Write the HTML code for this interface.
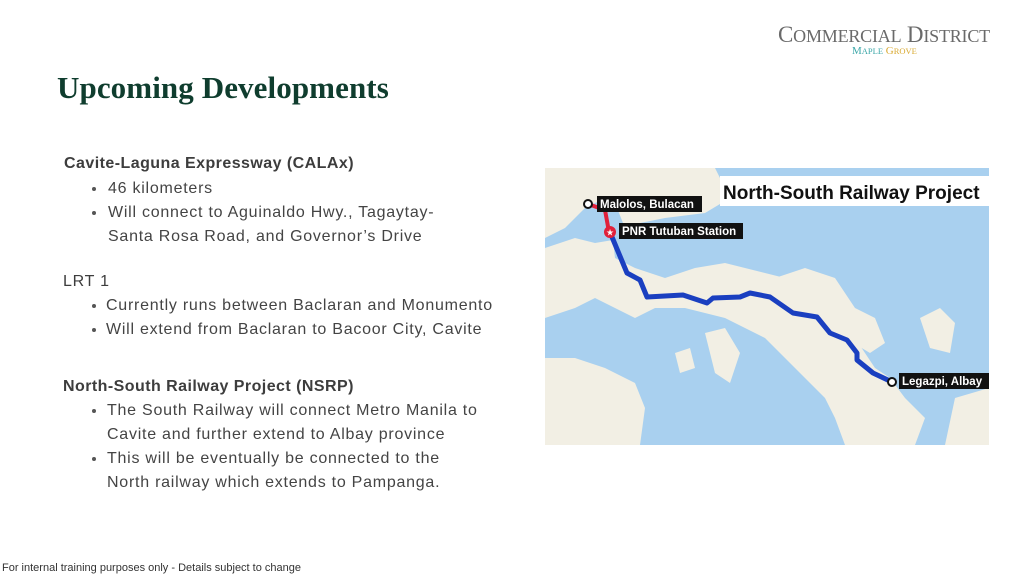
<!DOCTYPE html>
<html><head><meta charset="utf-8"><style>
body{margin:0;width:1024px;height:575px;background:#fff;position:relative;overflow:hidden;font-family:"Liberation Sans",sans-serif}
.t{position:absolute;white-space:nowrap;color:#444;font-size:16px;line-height:20px;letter-spacing:0.75px;top:0}
.h{color:#3d3d3d;font-weight:bold;font-size:16px;letter-spacing:0.45px}
.b{position:absolute;left:92px;width:4px;height:4px;border-radius:50%;background:#555}
</style></head><body>
<div style="position:absolute;left:778px;top:22px;font-family:'Liberation Serif',serif;color:#6a6a6a;font-size:23px;letter-spacing:-0.2px;white-space:nowrap">C<span style="font-size:18px">OMMERCIAL</span> D<span style="font-size:18px">ISTRICT</span></div>
<div style="position:absolute;left:852px;top:45px;font-family:'Liberation Serif',serif;font-size:11px;white-space:nowrap"><span style="color:#3aa6a8">M<span style="font-size:8.5px">APLE</span></span> <span style="color:#d9a930">G<span style="font-size:8.5px">ROVE</span></span></div>
<div style="position:absolute;left:57px;top:70px;font-family:'Liberation Serif',serif;font-weight:bold;font-size:31px;color:#0f3d2e;white-space:nowrap;letter-spacing:0.1px">Upcoming Developments</div>

<div class="t h" style="left:64px;top:154px">Cavite-Laguna Expressway (CALAx)</div>
<div class="b" style="top:187px"></div><div class="t" style="left:108px;top:179px">46 kilometers</div>
<div class="b" style="top:211px"></div><div class="t" style="left:108px;top:203px">Will connect to Aguinaldo Hwy., Tagaytay-</div>
<div class="t" style="left:108px;top:227px">Santa Rosa Road, and Governor’s Drive</div>

<div class="t" style="left:63px;top:272px;color:#3d3d3d">LRT 1</div>
<div class="b" style="top:304px"></div><div class="t" style="left:106px;top:296px">Currently runs between Baclaran and Monumento</div>
<div class="b" style="top:328px"></div><div class="t" style="left:106px;top:320px">Will extend from Baclaran to Bacoor City, Cavite</div>

<div class="t h" style="left:63px;top:377px">North-South Railway Project (NSRP)</div>
<div class="b" style="top:409px"></div><div class="t" style="left:107px;top:401px">The South Railway will connect Metro Manila to</div>
<div class="t" style="left:107px;top:425px">Cavite and further extend to Albay province</div>
<div class="b" style="top:457px"></div><div class="t" style="left:107px;top:449px">This will be eventually be connected to the</div>
<div class="t" style="left:107px;top:473px">North railway which extends to Pampanga.</div>

<div style="position:absolute;left:2px;top:562px;font-size:11px;color:#333;white-space:nowrap">For internal training purposes only - Details subject to change</div>

<svg style="position:absolute;left:545px;top:168px" width="444" height="277" viewBox="0 0 444 277">
<rect width="444" height="277" fill="#a9d0ef"/>
<g fill="#f2efe4">
<path d="M0 0H170L185 30L160 45L120 50L95 55L80 60L72 40L60 30L40 40L20 60L0 70Z"/>
<path d="M0 80L30 70L50 75L68 72L70 90L90 100L120 110L150 100L180 95L200 100L240 110L250 130L270 135L290 150L310 170L330 200L345 210L360 230L380 250L370 277H300L290 250L280 230L260 210L240 190L220 170L200 160L180 150L160 145L140 140L110 140L90 150L70 140L50 130L30 140L0 150Z"/>
<path d="M230 110L260 100L290 110L310 140L330 150L340 175L325 185L300 170L280 150L255 140Z"/>
<path d="M0 190L30 190L60 200L90 215L100 240L95 277H0Z"/>
<path d="M160 165L180 160L195 185L185 215L170 205Z"/>
<path d="M375 150L395 140L410 155L405 185L385 180Z"/>
<path d="M410 230L444 220V277H400Z"/>
<path d="M130 185L145 180L150 200L135 205Z"/>
</g>
<path d="M43 36L60 42L64 64" stroke="#e0203a" stroke-width="4" fill="none"/>
<path d="M67 69L82 105L95 112L102 129L138 127L162 135L168 130L195 129L205 125L225 129L248 145L272 149L285 165L302 172L312 185L312 192L328 205L347 214" stroke="#1a3fc0" stroke-width="5" fill="none" stroke-linejoin="round"/>
<circle cx="43" cy="36" r="4" fill="#fff" stroke="#111" stroke-width="2"/>
<circle cx="347" cy="214" r="4" fill="#fff" stroke="#111" stroke-width="2"/>
<circle cx="65" cy="64" r="6" fill="#e0203a"/><text x="65" y="67.5" font-size="9" fill="#fff" text-anchor="middle">★</text>
<rect x="175" y="8" width="269" height="30" fill="#fff"/>
<text x="178" y="31" font-family="Liberation Sans" font-weight="bold" font-size="19" fill="#111">North-South Railway Project</text>
<rect x="52" y="28" width="105" height="16" fill="#111"/><text x="55" y="40" font-family="Liberation Sans" font-weight="bold" font-size="11.5" fill="#fff">Malolos, Bulacan</text>
<rect x="74" y="55" width="124" height="16" fill="#111"/><text x="77" y="67" font-family="Liberation Sans" font-weight="bold" font-size="11.5" fill="#fff">PNR Tutuban Station</text>
<rect x="354" y="205" width="90" height="16" fill="#111"/><text x="357" y="217" font-family="Liberation Sans" font-weight="bold" font-size="11.5" fill="#fff">Legazpi, Albay</text>
</svg>
</body></html>
